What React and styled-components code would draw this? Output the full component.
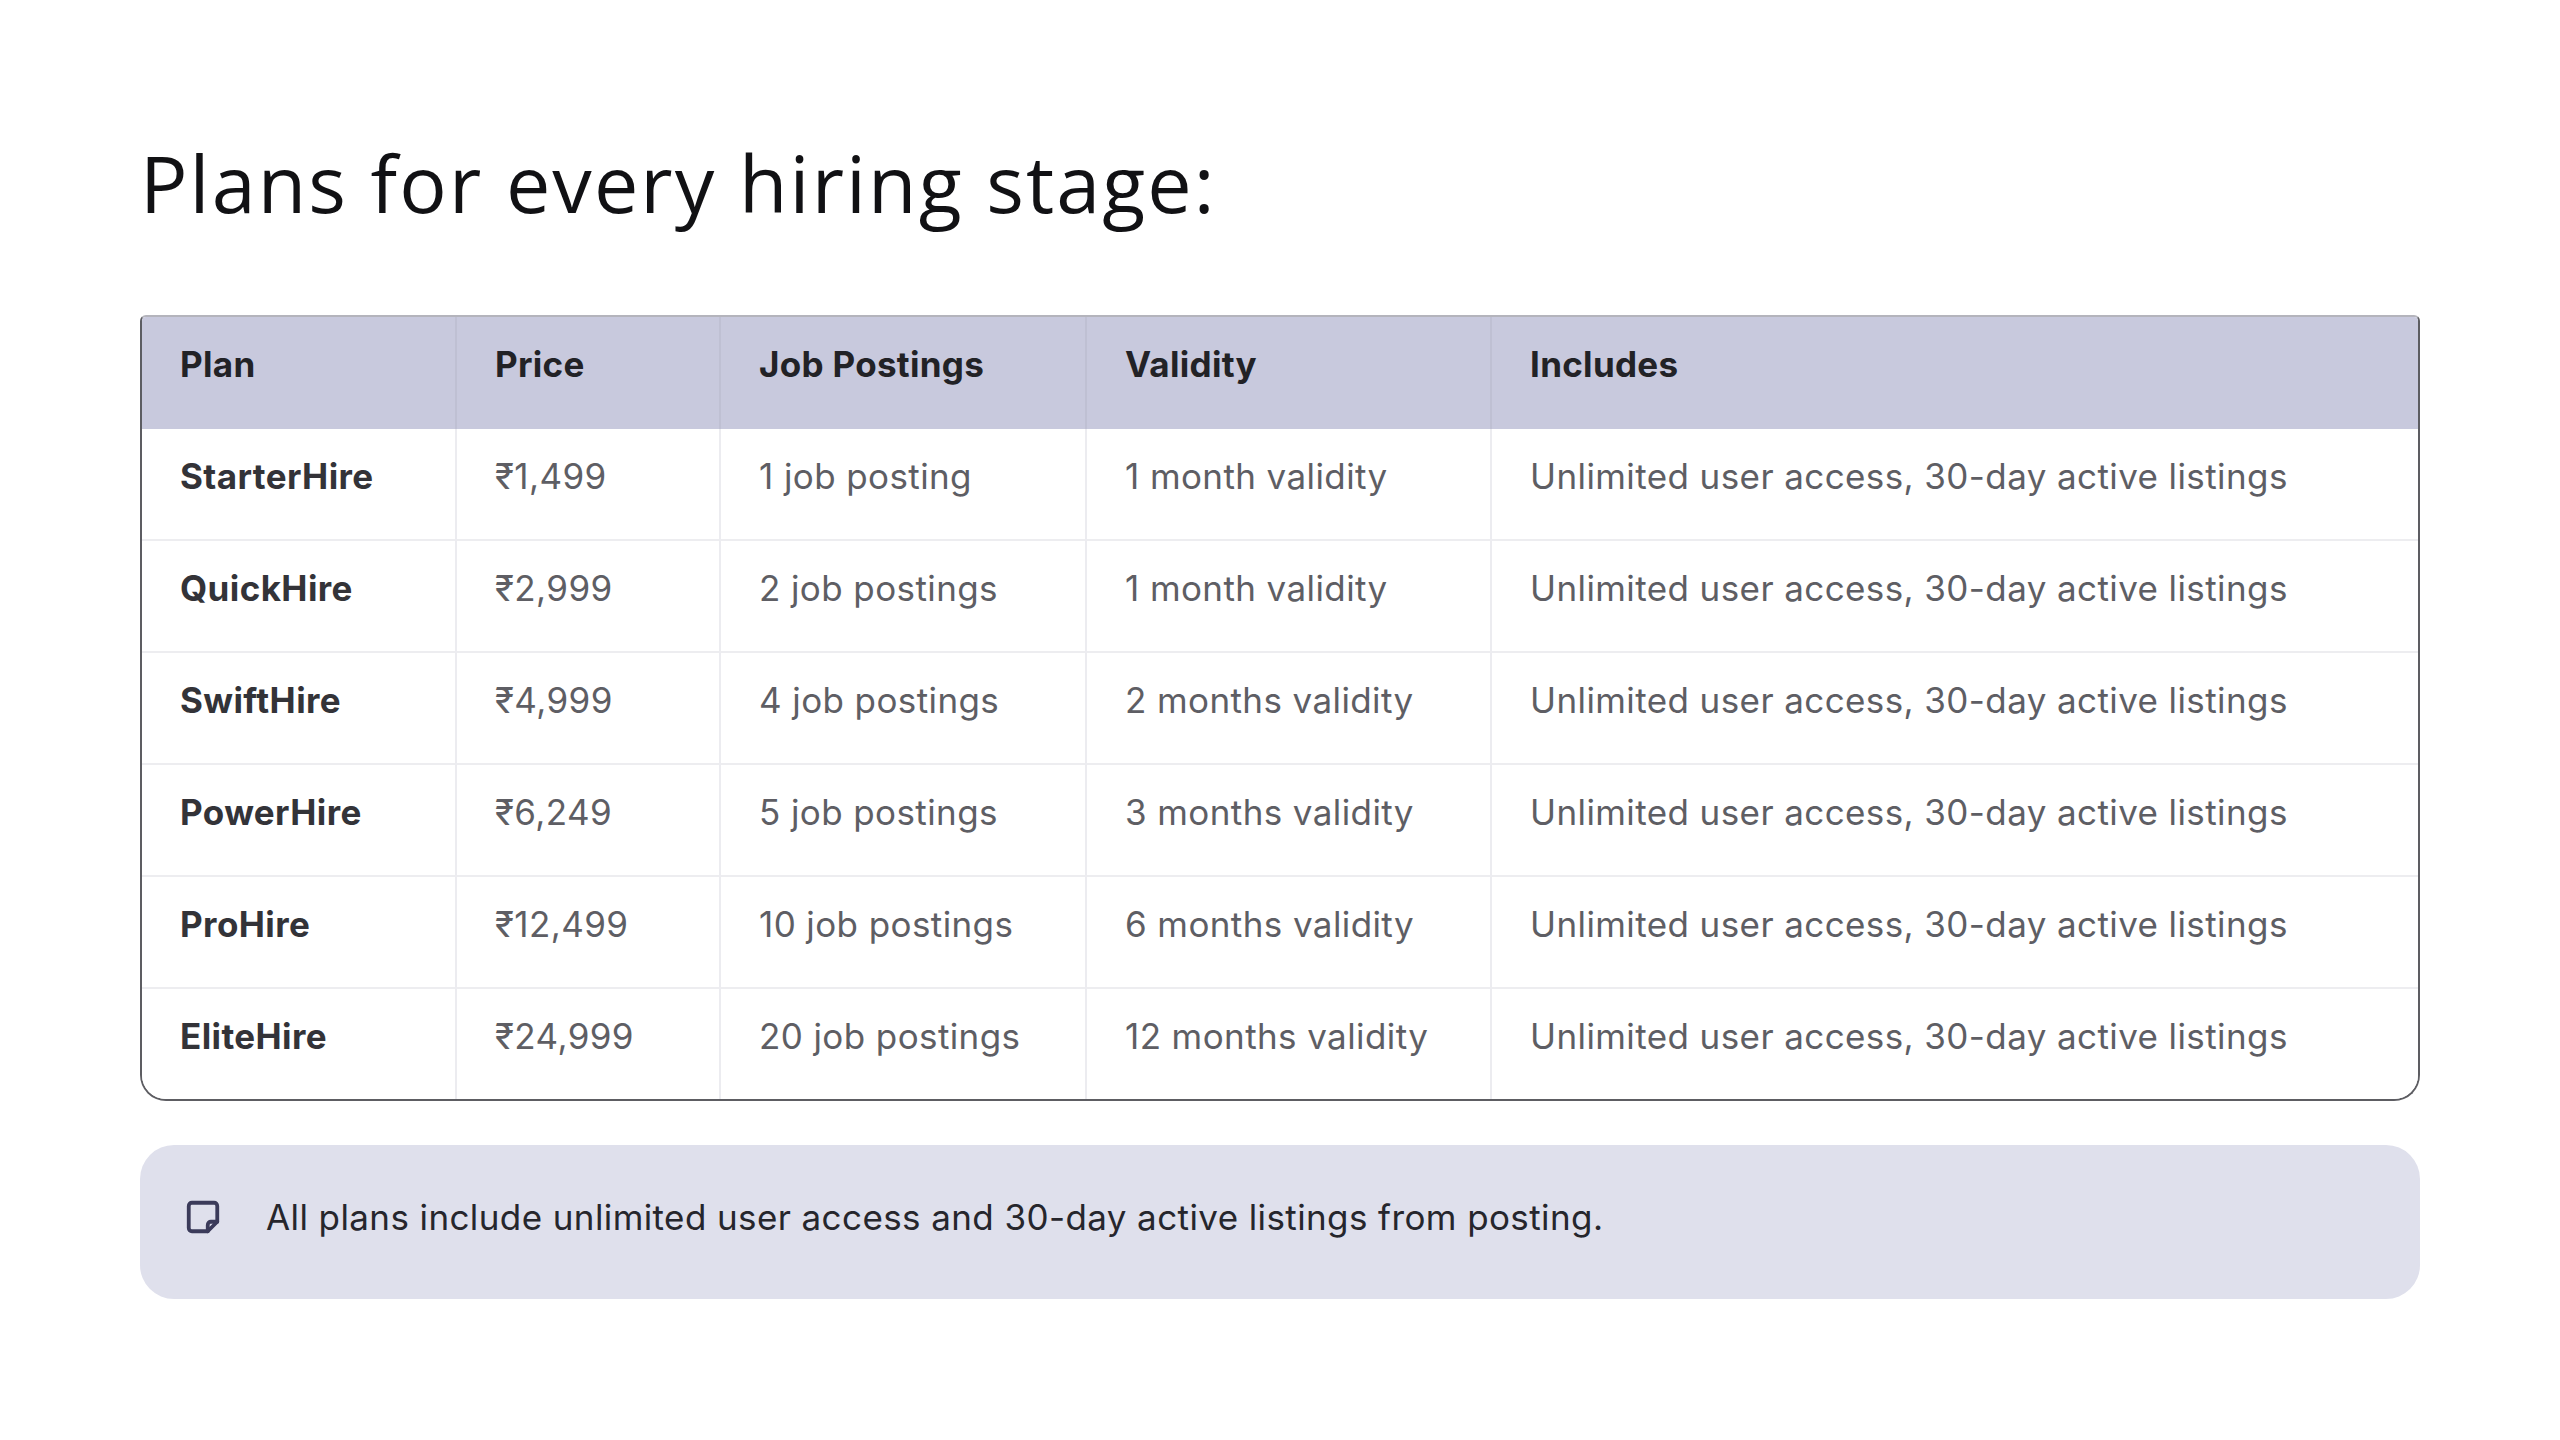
import React from "react";
import styled, { createGlobalStyle } from "styled-components";

const Global = createGlobalStyle`
  html, body { margin: 0; padding: 0; background: #ffffff; }
  body { font-family: Inter, "Liberation Sans", sans-serif; }
`;

const Page = styled.main`
  width: 2560px;
  min-height: 1440px;
  box-sizing: border-box;
  padding: 135px 140px 0 140px;
  display: flex;
  flex-direction: column;
`;

const Title = styled.h1`
  margin: 0;
  font-family: "Open Sans", "Liberation Sans", sans-serif;
  font-weight: 500;
  font-size: 79px;
  line-height: 95px;
  color: #111114;
  letter-spacing: 2.1px;
`;

const TableFrame = styled.div`
  margin-top: 85px;
  border: 2px solid #5d5d62;
  border-top-color: #b4b4bc;
  border-radius: 6px 6px 26px 26px;
  overflow: hidden;
`;

const Table = styled.table`
  width: 100%;
  border-collapse: collapse;
  table-layout: fixed;
`;

const HeadRow = styled.tr`
  background: #c8c9dd;
`;

const Row = styled.tr`
  background: #ffffff;
  & + & td { border-top: 2px solid #ededf0; }
`;

const Th = styled.th`
  text-align: left;
  padding: 27px 40px 44px 38px;
  font-size: 35px;
  line-height: 41px;
  font-weight: 700;
  letter-spacing: 0.3px;
  color: #222226;
  border-left: 2px solid #bfc0d3;
  &:first-child { border-left: none; }
`;

const Td = styled.td`
  text-align: left;
  padding: 27px 40px 42px 38px;
  font-size: 35px;
  line-height: 41px;
  font-weight: ${(p) => (p.$strong ? 700 : 400)};
  letter-spacing: 0.4px;
  color: ${(p) => (p.$strong ? "#333338" : "#5e5e64")};
  border-left: 2px solid #ececf0;
  white-space: nowrap;
  &:first-child { border-left: none; }
`;

const Note = styled.div`
  margin-top: 44px;
  height: 154px;
  box-sizing: border-box;
  background: #dfe0ec;
  border-radius: 34px;
  display: flex;
  align-items: center;
  gap: 44px;
  padding: 0 0 10px 44px;
`;

const NoteText = styled.p`
  margin: 0;
  font-size: 35px;
  line-height: 41px;
  letter-spacing: 0.4px;
  color: #26262c;
`;

const NoteIcon = () => (
  <svg width="38" height="38" viewBox="0 0 24 24" fill="none" stroke="#3b3b5a" strokeWidth="2.4" strokeLinecap="round" strokeLinejoin="round">
    <path d="M5 3h14a2 2 0 0 1 2 2v10l-6 6H5a2 2 0 0 1-2-2V5a2 2 0 0 1 2-2z" />
    <path d="M15 21v-4a2 2 0 0 1 2-2h4" />
  </svg>
);

const plans = [
  ["StarterHire", "₹1,499", "1 job posting", "1 month validity"],
  ["QuickHire", "₹2,999", "2 job postings", "1 month validity"],
  ["SwiftHire", "₹4,999", "4 job postings", "2 months validity"],
  ["PowerHire", "₹6,249", "5 job postings", "3 months validity"],
  ["ProHire", "₹12,499", "10 job postings", "6 months validity"],
  ["EliteHire", "₹24,999", "20 job postings", "12 months validity"],
];

export default function App() {
  return (
    <>
      <Global />
      <Page>
        <Title>Plans for every hiring stage:</Title>
        <TableFrame>
          <Table>
            <colgroup>
              <col style={{ width: "314px" }} />
              <col style={{ width: "264px" }} />
              <col style={{ width: "366px" }} />
              <col style={{ width: "405px" }} />
              <col />
            </colgroup>
            <thead>
              <HeadRow>
                <Th>Plan</Th>
                <Th>Price</Th>
                <Th>Job Postings</Th>
                <Th>Validity</Th>
                <Th>Includes</Th>
              </HeadRow>
            </thead>
            <tbody>
              {plans.map(([name, price, jobs, validity]) => (
                <Row key={name}>
                  <Td $strong>{name}</Td>
                  <Td>{price}</Td>
                  <Td>{jobs}</Td>
                  <Td>{validity}</Td>
                  <Td>Unlimited user access, 30-day active listings</Td>
                </Row>
              ))}
            </tbody>
          </Table>
        </TableFrame>
        <Note>
          <NoteIcon />
          <NoteText>All plans include unlimited user access and 30-day active listings from posting.</NoteText>
        </Note>
      </Page>
    </>
  );
}
